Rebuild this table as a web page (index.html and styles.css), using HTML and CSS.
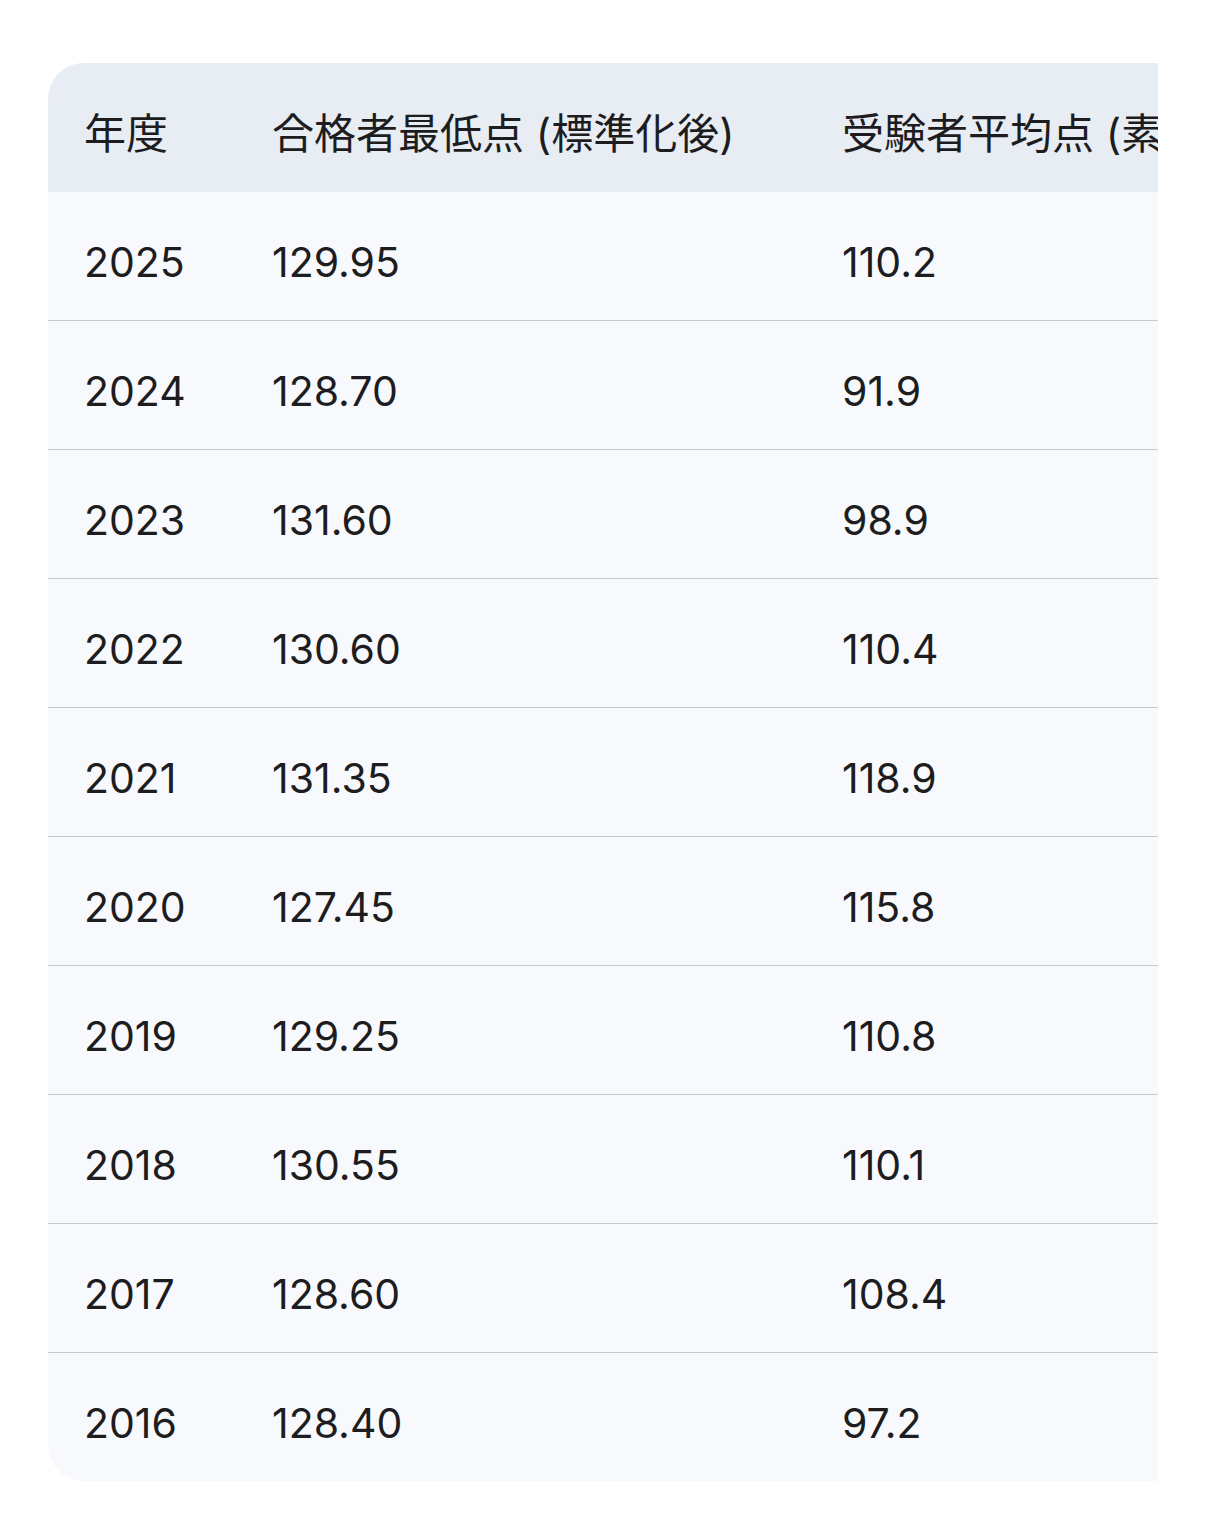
FILE: index.html
```html
<!DOCTYPE html>
<html lang="ja">
<head>
<meta charset="utf-8">
<link rel="stylesheet" href="styles.css">
</head>
<body>
<div class="scroller">
  <div class="table">
    <div class="row head">
      <div class="cell c1">年度</div>
      <div class="cell c2">合格者最低点 (標準化後)</div>
      <div class="cell c3">受験者平均点 (素点)</div>
      <div class="cell c4">合格者平均点</div>
    </div>
    <div class="row"><div class="cell c1">2025</div><div class="cell c2">129.95</div><div class="cell c3">110.2</div><div class="cell c4"></div></div>
    <div class="row"><div class="cell c1">2024</div><div class="cell c2">128.70</div><div class="cell c3">91.9</div><div class="cell c4"></div></div>
    <div class="row"><div class="cell c1">2023</div><div class="cell c2">131.60</div><div class="cell c3">98.9</div><div class="cell c4"></div></div>
    <div class="row"><div class="cell c1">2022</div><div class="cell c2">130.60</div><div class="cell c3">110.4</div><div class="cell c4"></div></div>
    <div class="row"><div class="cell c1">2021</div><div class="cell c2">131.35</div><div class="cell c3">118.9</div><div class="cell c4"></div></div>
    <div class="row"><div class="cell c1">2020</div><div class="cell c2">127.45</div><div class="cell c3">115.8</div><div class="cell c4"></div></div>
    <div class="row"><div class="cell c1">2019</div><div class="cell c2">129.25</div><div class="cell c3">110.8</div><div class="cell c4"></div></div>
    <div class="row"><div class="cell c1">2018</div><div class="cell c2">130.55</div><div class="cell c3">110.1</div><div class="cell c4"></div></div>
    <div class="row"><div class="cell c1">2017</div><div class="cell c2">128.60</div><div class="cell c3">108.4</div><div class="cell c4"></div></div>
    <div class="row last"><div class="cell c1">2016</div><div class="cell c2">128.40</div><div class="cell c3">97.2</div><div class="cell c4"></div></div>
  </div>
</div>
</body>
</html>
```

FILE: styles.css
```css
html, body {
  margin: 0;
  padding: 0;
  background: #ffffff;
}
body {
  padding: 63px 48px 0 48px;
  font-family: "Inter", "Noto Sans CJK JP", sans-serif;
  color: #1d1d1f;
}
.scroller {
  width: 1110px;
  overflow: hidden;
}
.table {
  width: 1600px;
  border-radius: 36px;
  overflow: hidden;
  background: #f8f9fc;
}
.row {
  display: grid;
  grid-template-columns: 188px 570px 520px 322px;
  height: 128px;
  border-bottom: 1px solid #c8cacf;
  background: #f8f9fc;
}
.row.head {
  height: 129px;
  border-bottom: none;
  background: #e8edf4;
}
.row.last {
  border-bottom: none;
}
.cell {
  display: flex;
  align-items: center;
  padding-left: 36px;
  padding-top: 12px;
  font-size: 41px;
  white-space: nowrap;
}
.head .cell {
  font-size: 42px;
  padding-top: 6px;
}
```
